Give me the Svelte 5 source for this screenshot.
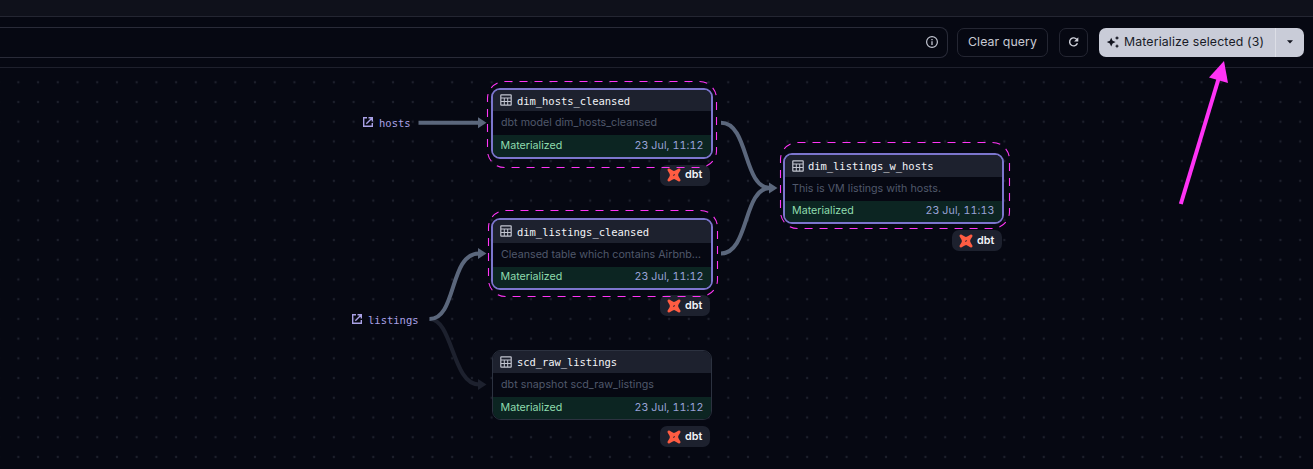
<script>
  const cards = [
    { x: 491, y: 88, w: 222, h: 71, name: 'dim_hosts_cleansed', nameWidth: 113, text: 'dbt model dim_hosts_cleansed', textWidth: 156, time: '23 Jul, 11:12', selected: true, rows: [21, 24], badge: [660, 164.5] },
    { x: 491, y: 218, w: 222, h: 72, name: 'dim_listings_cleansed', nameWidth: 132, text: 'Cleansed table which contains Airbnb…', textWidth: 200, time: '23 Jul, 11:12', selected: true, rows: [23, 24], badge: [660, 295] },
    { x: 782.5, y: 153, w: 221.5, h: 71, name: 'dim_listings_w_hosts', nameWidth: 125.5, text: 'This is VM listings with hosts.', textWidth: 149, time: '23 Jul, 11:13', selected: true, rows: [22, 24], badge: [952, 230] },
    { x: 492, y: 350, w: 220, h: 70, name: 'scd_raw_listings', nameWidth: 100, text: 'dbt snapshot scd_raw_listings', textWidth: 153, time: '23 Jul, 11:12', selected: false, rows: [22, 24], badge: [660, 426] }
  ];
  const sources = [
    { x: 362, y: 115, name: 'hosts' },
    { x: 351, y: 312, name: 'listings' }
  ];
  const outlines = [
    { x: 487.5, y: 81.5, w: 229, h: 86 },
    { x: 488.5, y: 210.5, w: 229, h: 86 },
    { x: 780.5, y: 142.5, w: 229, h: 86 }
  ];
</script>

<div class="page">
  <div class="strip"></div>
  <div class="toolbar">
    <div class="query">
      <svg width="14" height="14" viewBox="0 0 14 14" fill="none" stroke="#c3c6d2">
        <circle cx="7" cy="7" r="5.4" stroke-width="1.2" />
        <path d="M7 6.300v3.700M7 4v1.300" stroke-width="1.300" />
      </svg>
    </div>
    <button class="btn clear">Clear query</button>
    <button class="btn refresh" aria-label="Refresh">
      <svg width="12" height="12" viewBox="0 0 12 12">
        <path d="M9 3.700A4 4 0 1 0 9.400 7.300" fill="none" stroke="#d3d5de" stroke-width="1.400" />
        <path d="M10.300 1.300v4.200H6.100z" fill="#d3d5de" />
      </svg>
    </button>
    <div class="primary">
      <button class="main">
        <svg width="14" height="14" viewBox="0 0 14 14" fill="#12141f">
          <path d="M5.200 2.700l1.400 3 3 1.400-3 1.400-1.400 3-1.400-3-3-1.400 3-1.400z" />
          <path d="M11 .9l.7 1.400 1.400.7-1.400.7-.7 1.400-.7-1.400-1.400-.7 1.400-.7zM11 9l.7 1.400 1.400.7-1.400.7-.7 1.400-.7-1.400-1.400-.7 1.400-.7z" />
        </svg>
        <span>Materialize selected (3)</span>
      </button>
      <button class="drop" aria-label="More options">
        <svg width="6" height="4" viewBox="0 0 6 4"><path d="M0 .3h6L3 3.500z" fill="#12141f" /></svg>
      </button>
    </div>
  </div>

  <div class="canvas">
    <svg class="layer" width="1313" height="469" viewBox="0 0 1313 469">
      <defs>
        <pattern id="dots" x="8.500" y="72.400" width="19.720" height="19.720" patternUnits="userSpaceOnUse">
          <circle cx="9.860" cy="9.860" r="1.200" fill="#1d202c" />
        </pattern>
      </defs>
      <rect x="0" y="68" width="1313" height="401" fill="url(#dots)" />
      <g fill="none" stroke="#1d212e" stroke-width="4">
        <path d="M429.500 319C453 319 452 384.500 479 384.500" />
        <path d="M478 379l8.500 5.500-8.500 5.500z" fill="#1d212e" stroke="none" />
      </g>
      <g fill="none" stroke="#5b677c" stroke-width="4">
        <path d="M418.500 122.800H479" />
        <path d="M429.500 319C457 319 449 253.500 479 253.500" />
        <path d="M721 122.800C749 122.800 743 188 770 188" />
        <path d="M721 253.500C749 253.500 743 188 770 188" />
        <g fill="#5b677c" stroke="none">
          <path d="M478 117.300l8.500 5.500-8.500 5.500z" />
          <path d="M478 248l8.500 5.500-8.500 5.500z" />
          <path d="M769 182.500l8.500 5.500-8.500 5.500z" />
        </g>
      </g>
    </svg>

    {#each sources as s}
      <div class="source" style="left:{s.x}px;top:{s.y}px">
        <svg width="12" height="12" viewBox="0 0 12 12" fill="none" stroke="#a9a1e6" stroke-width="1.400">
          <path d="M5 1.700H1.700v8.600h8.600V7M6.500 1.700h3.800v3.800M10.100 1.900L4.300 7.700" />
        </svg>
        <span>{s.name}</span>
      </div>
    {/each}

    {#each cards as c}
      <div class="card" class:selected={c.selected} style="left:{c.x}px;top:{c.y}px;width:{c.w}px;height:{c.h}px;grid-template-rows:{c.rows[0]}px {c.rows[1]}px 1fr">
        <div class="head">
          <svg width="12" height="12" viewBox="0 0 12 12" fill="none" stroke="#c2c5d0">
            <rect x=".8" y=".8" width="10.400" height="10.400" rx=".5" stroke-width="1.200" />
            <path d="M1 4h10M1 7.500h10M4.300 4v7M7.700 4v7" />
          </svg>
          <svg class="name" width={c.nameWidth} height="16"><text x="0" y="12" textLength={c.nameWidth}>{c.name}</text></svg>
        </div>
        <div class="desc">
          <svg width={c.textWidth} height="16"><text x="0" y="12" textLength={c.textWidth}>{c.text}</text></svg>
        </div>
        <div class="foot"><span class="state">Materialized</span><span class="time">{c.time}</span></div>
      </div>
      <div class="badge" style="left:{c.badge[0]}px;top:{c.badge[1]}px">
        <svg width="14" height="14" viewBox="0 0 14 14">
          <path fill="#ff5c42" fill-rule="evenodd" d="M2.200.5L5.800 2.600Q7 3.200 8.200 2.500L11.800.5Q13.800.2 13.500 2.200L11.400 5.800Q10.800 7 11.500 8.200L13.500 11.800Q13.800 13.800 11.800 13.500L8.200 11.400Q7 10.800 5.800 11.500L2.200 13.500Q.2 13.800.5 11.800L2.600 8.200Q3.200 7 2.500 5.800L.5 2.200Q.2.2 2.200.5zM7.600 6.100L6.100 7l.4.900L7.900 7z" />
        </svg>
        <span>dbt</span>
      </div>
    {/each}

    <svg class="layer" width="1313" height="469" viewBox="0 0 1313 469">
      {#each outlines as o}
        <rect x={o.x} y={o.y} width={o.w} height={o.h} rx="17" fill="none" stroke="#ff35f5" stroke-width="1.100" stroke-dasharray="8 7" />
      {/each}
      <path d="M1180.800 204L1218.500 79" stroke="#ff33f5" stroke-width="4" />
      <path d="M1224 61l-15 16.500 19 5.500z" fill="#ff33f5" />
    </svg>
  </div>
</div>

<style>
  :global(body) { background: #060812; }
  .page {
    position: relative;
    display: flex;
    flex-direction: column;
    width: 1313px;
    height: 469px;
    overflow: hidden;
    background: #060812;
    font-family: Inter, sans-serif;
  }
  button { margin: 0; padding: 0; border: 0; background: none; font: inherit; letter-spacing: inherit; color: inherit; }
  svg { display: block; flex: none; }
  .strip { box-sizing: border-box; height: 17px; background: #0f111b; border-bottom: 1px solid #242632; }
  .toolbar {
    box-sizing: border-box;
    display: flex;
    align-items: center;
    height: 51px;
    padding-right: 9px;
    border-bottom: 1px solid #1e202c;
  }
  .query {
    box-sizing: border-box;
    display: flex;
    align-items: center;
    justify-content: flex-end;
    width: 948px;
    height: 31px;
    padding-right: 8px;
    border: 1px solid #292b38;
    border-left: 0;
    border-radius: 0 8px 8px 0;
  }
  .btn {
    box-sizing: border-box;
    display: flex;
    align-items: center;
    justify-content: center;
    height: 29px;
    padding-bottom: 1px;
    border: 1px solid #242632;
    border-radius: 7px;
    color: #c8cad4;
    font-size: 12.300px;
    letter-spacing: 0.100px;
  }
  .clear { width: 91px; margin-left: 9px; }
  .refresh { width: 29px; margin-left: 11px; padding-bottom: 0; }
  .primary {
    display: flex;
    height: 29px;
    width: 205px;
    margin-left: 11px;
    border-radius: 7px;
    background: #c9ccd8;
    color: #171a26;
    font-size: 12.300px;
    letter-spacing: 0.150px;
  }
  .main { display: flex; align-items: center; gap: 4px; width: 176px; padding-left: 7px; white-space: nowrap; }
  .main span { padding-bottom: 1px; }
  .drop { display: flex; align-items: center; justify-content: center; flex: 1; border-left: 1px solid #dcdee6; }
  .layer { position: absolute; left: 0; top: 0; pointer-events: none; }
  .source {
    position: absolute;
    display: flex;
    gap: 5px;
    color: #a9a1e6;
    font: 10.500px/17px "DejaVu Sans Mono", monospace;
  }
  .source svg { margin-top: 1px; }
  .card {
    position: absolute;
    box-sizing: border-box;
    display: grid;
    overflow: hidden;
    border: 1px solid #2c3240;
    border-radius: 9px;
    background: #060812;
  }
  .card.selected { border: 2px solid #7c76cd; }
  .head { display: flex; align-items: center; gap: 4.500px; padding: 0 0 1px 7px; background: #1d212e; }
  .name text { font: 10.500px "DejaVu Sans Mono", monospace; fill: #f2f3f7; }
  .name { margin-top: 1px; }
  .desc { display: flex; align-items: center; padding: 0 0 2px 7.500px; }
  .desc text { font: 10.700px Inter, sans-serif; fill: #50586b; }
  .foot {
    display: flex;
    align-items: center;
    justify-content: space-between;
    padding: 0 7.500px 2px;
    background: #0c2522;
    font-size: 10.700px;
  }
  .state { color: #8fdcae; }
  .time { color: #99a1d6; font-variant-numeric: tabular-nums; letter-spacing: 0.080px; }
  .badge {
    position: absolute;
    box-sizing: border-box;
    display: flex;
    align-items: center;
    gap: 4px;
    width: 50px;
    height: 21px;
    padding-left: 7px;
    border-radius: 7px;
    background: #1d212e;
    color: #f2f3f7;
    font-size: 10.800px;
    font-weight: 600;
  }
  .badge span { padding-bottom: 1px; }
</style>
